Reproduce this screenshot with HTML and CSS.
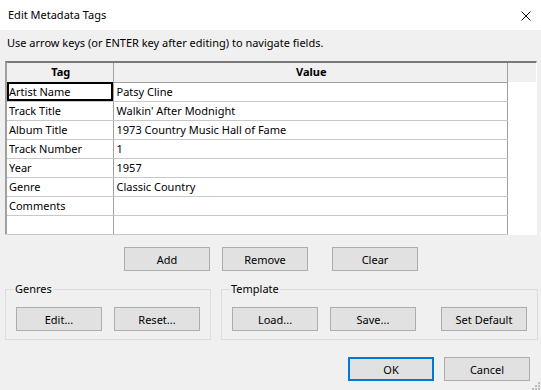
FILE: index.html
```html
<!DOCTYPE html>
<html lang="en">
<head>
    <meta charset="UTF-8">
    <title>Edit Metadata Tags</title>
    <link rel="stylesheet" href="styles.css">
</head>
<body>
    <div class="dialog">
        <div class="titlebar">
            <span class="title">Edit Metadata Tags</span>
            <svg class="close" width="10" height="10" viewBox="0 0 10 10">
                <path d="M0.5 0.5 L9.5 9.5 M9.5 0.5 L0.5 9.5" stroke="#000" stroke-width="1" fill="none"/>
            </svg>
        </div>

        <div class="content">
            <div class="hint">Use arrow keys (or ENTER key after editing) to navigate fields.</div>

            <div class="grid-box">
                <table class="grid">
                    <thead>
                        <tr>
                            <th class="col-tag">Tag</th>
                            <th class="col-value">Value</th>
                        </tr>
                    </thead>
                    <tbody>
                        <tr><td class="selected">Artist Name</td><td>Patsy Cline</td></tr>
                        <tr><td>Track Title</td><td>Walkin' After Modnight</td></tr>
                        <tr><td>Album Title</td><td>1973 Country Music Hall of Fame</td></tr>
                        <tr><td>Track Number</td><td>1</td></tr>
                        <tr><td>Year</td><td>1957</td></tr>
                        <tr><td>Genre</td><td>Classic Country</td></tr>
                        <tr><td>Comments</td><td></td></tr>
                        <tr><td></td><td></td></tr>
                    </tbody>
                </table>
                <div class="grid-filler">
                    <div class="filler-head"></div>
                </div>
            </div>

            <div class="actions">
                <button>Add</button>
                <button>Remove</button>
                <button class="clear">Clear</button>
            </div>

            <div class="groups">
                <fieldset class="group genres">
                    <legend>Genres</legend>
                    <button>Edit...</button>
                    <button>Reset...</button>
                </fieldset>
                <fieldset class="group template">
                    <legend>Template</legend>
                    <button>Load...</button>
                    <button>Save...</button>
                    <button class="set-default">Set Default</button>
                </fieldset>
            </div>

            <div class="footer">
                <button class="default">OK</button>
                <button>Cancel</button>
            </div>
        </div>

        <svg class="grip" width="9" height="9" viewBox="0 0 9 9">
            <rect x="7" y="1" width="2" height="2" fill="#bcbcbc"/>
            <rect x="4" y="4" width="2" height="2" fill="#bcbcbc"/>
            <rect x="7" y="4" width="2" height="2" fill="#bcbcbc"/>
            <rect x="1" y="7" width="2" height="2" fill="#bcbcbc"/>
            <rect x="4" y="7" width="2" height="2" fill="#bcbcbc"/>
            <rect x="7" y="7" width="2" height="2" fill="#bcbcbc"/>
        </svg>
    </div>
</body>
</html>
```

FILE: styles.css
```css
body {
    margin: 0;
    font-family: 'Noto Sans', 'Open Sans', sans-serif;
    font-size: 11px;
    color: #000;
    background-color: #f0f0f0;
}

.dialog {
    position: relative;
    width: 541px;
    height: 390px;
    background-color: #f0f0f0;
    overflow: hidden;
}

.titlebar {
    height: 30px;
    background-color: #fff;
    display: flex;
    align-items: center;
    justify-content: space-between;
    padding: 0 10px 0 8px;
}

.title {
    line-height: 16px;
    margin-top: -1px;
}

.close {
    display: block;
    margin-top: 1px;
}

.content {
    padding: 0 4px 0 5px;
}

.hint {
    padding-left: 2px;
    line-height: 16px;
    margin-top: 5px;
}

.grid-box {
    margin-top: 10px;
    height: 174px;
    box-sizing: border-box;
    border-style: solid;
    border-width: 2px 1px 1px 2px;
    border-color: #7a7a7a #ffffff #ffffff #a0a0a0;
    background-color: #fff;
    display: flex;
    align-items: flex-start;
}

.grid {
    border-collapse: collapse;
    table-layout: fixed;
    width: 501px;
}

.grid th,
.grid td {
    height: 19px;
    padding: 0 0 0 2px;
    box-sizing: border-box;
    text-align: left;
    white-space: nowrap;
    overflow: hidden;
    line-height: 16px;
    border-right: 1px solid #a0a0a0;
    border-bottom: 1px solid #c8c8c8;
}

.grid th {
    background-color: #f0f0f0;
    font-weight: 700;
    text-align: center;
    border-bottom: 1px solid #a0a0a0;
}

.col-tag {
    width: 106px;
}

.grid td.selected {
    outline: 2px solid #000;
    outline-offset: -2px;
}

.grid td + td {
    padding-left: 3px;
}

.grid-filler {
    flex: 1;
}

.filler-head {
    height: 19px;
    background-color: #f0f0f0;
}

.actions {
    display: flex;
    gap: 12px;
    margin-top: 12px;
    padding-left: 119px;
}

.actions .clear {
    margin-left: 12px;
}

button {
    width: 86px;
    height: 24px;
    box-sizing: border-box;
    background-color: #e1e1e1;
    border: 1px solid #adadad;
    font-family: 'Noto Sans', 'Open Sans', sans-serif;
    font-size: 11px;
    color: #000;
    padding: 0;
}

button.default {
    border: 2px solid #0078d7;
}

.groups {
    display: flex;
    gap: 10px;
    margin-top: 10px;
}

.group {
    margin: 0;
    border: 1px solid #dcdcdc;
    padding: 10px 10px 8px 10px;
    display: flex;
    gap: 12px;
}

.group legend {
    padding: 0 1px;
    margin-left: -2px;
    line-height: 16px;
}

.genres {
    width: 206px;
    box-sizing: border-box;
}

.template {
    width: 316px;
    box-sizing: border-box;
}

.template .set-default {
    margin-left: 13px;
}

.footer {
    display: flex;
    justify-content: flex-end;
    gap: 10px;
    margin-top: 17px;
    padding-right: 7px;
}

.grip {
    position: absolute;
    right: 1px;
    bottom: 0;
}
```
